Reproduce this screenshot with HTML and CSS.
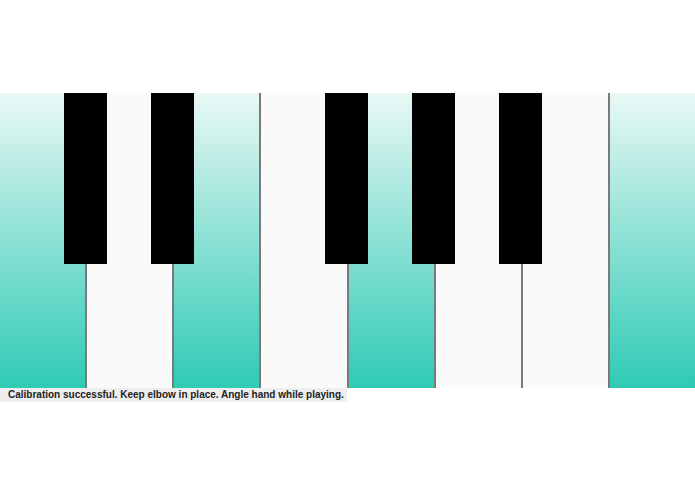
FILE: index.html
```html
<!DOCTYPE html>
<html>
<head>
<meta charset="utf-8">
<link rel="stylesheet" href="styles.css">
</head>
<body>
<div class="stage">
  <div class="keyboard">
    <div class="key lit"></div>
    <div class="key white"></div>
    <div class="key lit"></div>
    <div class="key white"></div>
    <div class="key lit"></div>
    <div class="key white"></div>
    <div class="key white"></div>
    <div class="key lit"></div>
    <div class="black b1"></div>
    <div class="black b2"></div>
    <div class="black b3"></div>
    <div class="black b4"></div>
    <div class="black b5"></div>
  </div>
  <div class="status">Calibration successful. Keep elbow in place. Angle hand while playing.</div>
</div>
</body>
</html>
```
FILE: styles.css
```css
html, body {
  margin: 0;
  padding: 0;
  background: #ffffff;
}
.stage {
  padding-top: 93px;
  width: 695px;
}
.keyboard {
  position: relative;
  display: flex;
  height: 295px;
}
.key {
  flex: 1 1 0;
  box-sizing: border-box;
  border-left: 1px solid #7a7a7a;
  border-right: 1px solid #7a7a7a;
}
.key:first-child {
  border-left: none;
}
.key:nth-child(8) {
  border-right: none;
}
.lit {
  background: linear-gradient(to bottom, #e9f8f5 0%, #2ecab4 100%);
}
.white {
  background: #fafafa;
}
.black {
  position: absolute;
  top: 0;
  width: 43px;
  height: 171px;
  background: #000000;
}
.b1 { left: 64px; }
.b2 { left: 151px; }
.b3 { left: 325px; }
.b4 { left: 412px; }
.b5 { left: 499px; }
.status {
  display: inline-block;
  background: #eeeeee;
  color: #222222;
  font-family: "Liberation Sans", Arial, sans-serif;
  font-weight: bold;
  font-size: 10px;
  line-height: 14px;
  padding: 0 3px 0 8px;
  vertical-align: top;
}
```
